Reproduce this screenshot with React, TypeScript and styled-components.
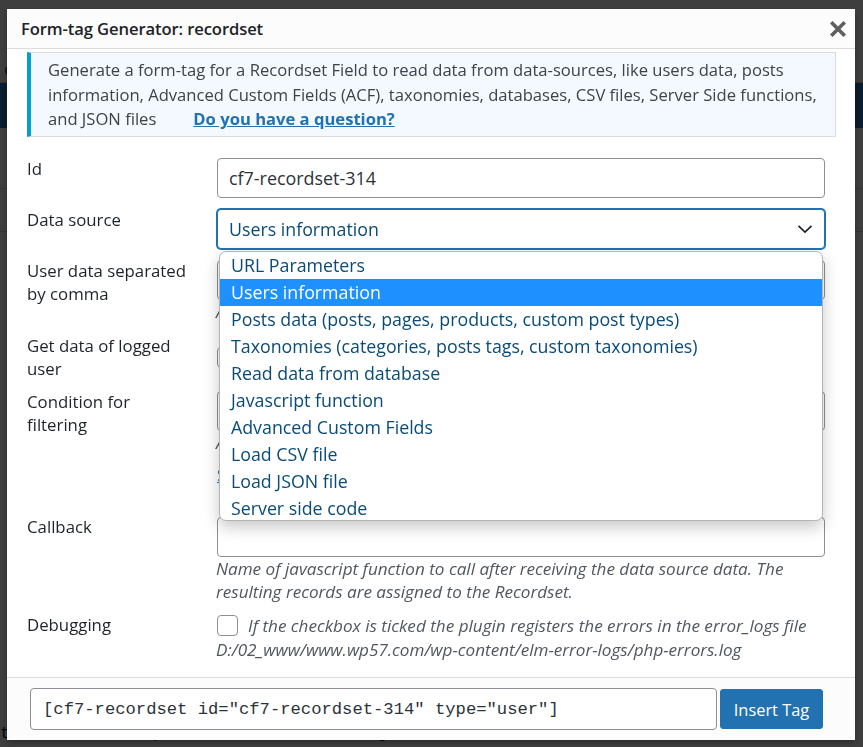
import React from 'react';
import styled, { createGlobalStyle } from 'styled-components';

const GlobalStyle = createGlobalStyle`
  html, body { margin: 0; padding: 0; }
  body {
    width: 863px;
    height: 747px;
    overflow: hidden;
    background: #f0f0f1;
    font-family: "Open Sans", "Noto Sans", sans-serif;
  }
  *, *::before, *::after { box-sizing: border-box; }
`;

/* ---------- underlying admin page (dimmed) ---------- */
const Page = styled.div`
  width: 863px;
  height: 747px;
  overflow: hidden;
  background: #f0f0f1;
  display: flex;
  flex-direction: column;
`;

const PageTop = styled.div`
  height: 86px;
  border-bottom: 1px solid #c3c4c7;
  padding: 58px 0 0 0;
  font-size: 16px;
  color: #1d2327;
`;

const BlueBand = styled.div`
  height: 50px;
  background: #2271b1;
`;

const PageRule = styled.div<{ $mt: number }>`
  margin-top: ${(p) => p.$mt}px;
  height: 1px;
  background: #c3c4c7;
`;

const CodeBlock = styled.pre<{ $mt: number; $lh: number }>`
  margin: ${(p) => p.$mt}px 0 0 0;
  padding: 0;
  font-family: "Liberation Mono", monospace;
  font-size: 17px;
  line-height: ${(p) => p.$lh}px;
  color: #1d2327;
  white-space: pre;
`;

const Overlay = styled.div`
  position: fixed;
  inset: 0;
  background: rgba(0, 0, 0, 0.74);
`;

/* ---------- modal ---------- */
const Modal = styled.div`
  position: fixed;
  top: 9px;
  left: 7px;
  width: 848px;
  height: 731px;
  background: #fff;
  box-shadow: 0 3px 6px rgba(0, 0, 0, 0.3);
  display: flex;
  flex-direction: column;
  color: #1d2327;
`;

const Header = styled.div`
  height: 40px;
  flex: none;
  display: flex;
  align-items: center;
  justify-content: space-between;
  background: #fcfcfc;
  border-bottom: 1px solid #dcdcde;
  padding-left: 14px;
`;

const Title = styled.div`
  font-size: 16.6px;
  font-weight: 600;
  color: #1d2327;
  line-height: 39px;
  letter-spacing: -0.1px;
`;

const CloseButton = styled.button`
  width: 34px;
  height: 39px;
  border: 0;
  background: transparent;
  padding: 0;
  display: flex;
  align-items: center;
  justify-content: center;
  cursor: pointer;
`;

const Body = styled.div`
  flex: 1;
  overflow: hidden;
  padding: 3px 19px 0 20px;
`;

const Notice = styled.div`
  height: 85px;
  background: #f3f9fe;
  border: 1px solid #dcdcde;
  border-left: 4px solid #00a0d2;
  padding: 5px 12px 0 17px;
  font-size: 16.6px;
  line-height: 24.5px;
  color: #3c434a;
`;

const NoticeLink = styled.a`
  margin-left: 37px;
  font-weight: 700;
  color: #2271b1;
  text-decoration: underline;
`;

const Form = styled.div`
  margin-top: 21px;
  display: flex;
  flex-direction: column;
`;

const Row = styled.div<{ $pb?: number }>`
  display: grid;
  grid-template-columns: 190px 608px;
  padding-bottom: ${(p) => (p.$pb ?? 11)}px;
`;

const Label = styled.div`
  font-size: 16.8px;
  line-height: 22.5px;
  color: #1d2327;
  white-space: nowrap;
`;

const Field = styled.div<{ $mt?: number }>`
  position: relative;
  display: flex;
  flex-direction: column;
  margin-top: ${(p) => p.$mt ?? 0}px;
`;

const TextInput = styled.div`
  height: 40px;
  border: 1px solid #8c8f94;
  border-radius: 4px;
  background: #fff;
  padding: 0 11px;
  display: flex;
  align-items: center;
  font-size: 17.9px;
  color: #2c3338;
`;

const Select = styled.div`
  height: 40px;
  border: 1px solid #2271b1;
  box-shadow: 0 0 0 1px #2271b1;
  border-radius: 4px;
  background: #fff;
  padding: 0 11px;
  display: flex;
  align-items: center;
  justify-content: space-between;
  font-size: 17.8px;
  color: #0a4b78;
`;

const Description = styled.div<{ $lh?: number }>`
  font-size: 17.1px;
  font-style: italic;
  line-height: ${(p) => p.$lh ?? 24}px;
  color: #50575e;
  margin-left: -1px;
`;

const HelpLink = styled.a`
  margin-top: 8px;
  font-size: 16.8px;
  line-height: 24px;
  color: #2271b1;
  text-decoration: underline;
`;

const Checkbox = styled.span<{ $mt?: number }>`
  display: inline-block;
  width: 21px;
  height: 21px;
  border: 1px solid #8c8f94;
  border-radius: 4px;
  background: #fff;
  margin-top: ${(p) => p.$mt ?? 0}px;
`;

const InlineCheck = styled(Checkbox)`
  vertical-align: top;
  margin: 1px 10px 0 1px;
`;

const Dropdown = styled.div`
  position: absolute;
  top: 42px;
  left: 2px;
  right: 2px;
  height: 270px;
  overflow: hidden;
  background: #fff;
  border: 1px solid #b4b4b4;
  border-radius: 7px;
  box-shadow: 0 6px 16px rgba(0, 0, 0, 0.22);
  z-index: 10;
`;

const Option = styled.div<{ $selected?: boolean }>`
  height: 27px;
  line-height: 26px;
  padding-left: 11px;
  font-size: 17.8px;
  white-space: nowrap;
  color: ${(p) => (p.$selected ? '#fff' : '#0a4b78')};
  background: ${(p) => (p.$selected ? '#1e90ff' : 'transparent')};
`;

const Footer = styled.div`
  flex: none;
  height: 63px;
  border-top: 1px solid #dcdcde;
  background: #fcfcfc;
  display: flex;
  align-items: center;
  gap: 3px;
  padding: 0 32px 0 23px;
`;

const TagInput = styled.div`
  flex: 1;
  height: 42px;
  border: 1px solid #8c8f94;
  border-radius: 4px;
  background: #fff;
  padding: 0 12px;
  display: flex;
  align-items: center;
  font-family: "Liberation Mono", monospace;
  font-size: 17.2px;
  color: #2c3338;
  white-space: nowrap;
`;

const InsertButton = styled.button`
  width: 103px;
  height: 40px;
  border: 1px solid #2271b1;
  border-radius: 3px;
  background: #2271b1;
  color: #fff;
  font-family: "Open Sans", "Noto Sans", sans-serif;
  font-size: 16.4px;
  padding: 0;
  cursor: pointer;
`;

const options = [
  'URL Parameters',
  'Users information',
  'Posts data (posts, pages, products, custom post types)',
  'Taxonomies (categories, posts tags, custom taxonomies)',
  'Read data from database',
  'Javascript function',
  'Advanced Custom Fields',
  'Load CSV file',
  'Load JSON file',
  'Server side code',
];

export default function App() {
  return (
    <>
      <GlobalStyle />
      <Page>
        <PageTop>&nbsp;o</PageTop>
        <BlueBand />
        <PageRule $mt={60} />
        <PageRule $mt={42} />
        <CodeBlock $mt={212} $lh={31}>{[' s', ' 1', ' t'].join('\n')}</CodeBlock>
        <CodeBlock $mt={48} $lh={26.5}>{[' s', ' y', ' t', ' t', ' t'].join('\n')}</CodeBlock>
        <CodeBlock $mt={4} $lh={26}>{'t= 152  field= post_title2  value= v ]'}</CodeBlock>
      </Page>
      <Overlay />
      <Modal>
        <Header>
          <Title>Form-tag Generator: recordset</Title>
          <CloseButton aria-label="Close">
            <svg width="16" height="16" viewBox="0 0 16 16">
              <path d="M2.5 2.5 L13.5 13.5 M13.5 2.5 L2.5 13.5" stroke="#5f5f5f" strokeWidth="3.6" strokeLinecap="square" />
            </svg>
          </CloseButton>
        </Header>
        <Body>
          <Notice>
            Generate a form-tag for a Recordset Field to read data from data-sources, like users data, posts
            information, Advanced Custom Fields (ACF), taxonomies, databases, CSV files, Server Side functions,
            and JSON files
            <NoticeLink href="#">Do you have a question?</NoticeLink>
          </Notice>
          <Form>
            <Row>
              <Label>Id</Label>
              <Field>
                <TextInput>cf7-recordset-314</TextInput>
              </Field>
            </Row>
            <Row>
              <Label>Data source</Label>
              <Field>
                <Select>
                  <span>Users information</span>
                  <svg width="16" height="10" viewBox="0 0 16 10">
                    <path d="M1.5 1.8 L8 8 L14.5 1.8" fill="none" stroke="#1d2327" strokeWidth="1.7" />
                  </svg>
                </Select>
                <Dropdown>
                  {options.map((o) => (
                    <Option key={o} $selected={o === 'Users information'}>
                      {o}
                    </Option>
                  ))}
                </Dropdown>
              </Field>
            </Row>
            <Row>
              <Label>
                User data separated
                <br />
                by comma
              </Label>
              <Field>
                <TextInput />
                <Description>A comma separated list of user attributes</Description>
              </Field>
            </Row>
            <Row>
              <Label>
                Get data of logged
                <br />
                user
              </Label>
              <Field>
                <Checkbox $mt={12} />
              </Field>
            </Row>
            <Row $pb={29}>
              <Label>
                Condition for
                <br />
                filtering
              </Label>
              <Field>
                <TextInput />
                <Description>Apply a condition to filter the records</Description>
                <HelpLink href="#">See examples</HelpLink>
              </Field>
            </Row>
            <Row>
              <Label>Callback</Label>
              <Field $mt={1}>
                <TextInput />
                <Description $lh={23}>
                  Name of javascript function to call after receiving the data source data. The resulting records are
                  assigned to the Recordset.
                </Description>
              </Field>
            </Row>
            <Row>
              <Label>Debugging</Label>
              <Field>
                <Description>
                  <InlineCheck />
                  If the checkbox is ticked the plugin registers the errors in the error_logs file
                  D:/02_www/www.wp57.com/wp-content/elm-error-logs/php-errors.log
                </Description>
              </Field>
            </Row>
          </Form>
        </Body>
        <Footer>
          <TagInput>[cf7-recordset id="cf7-recordset-314" type="user"]</TagInput>
          <InsertButton>Insert Tag</InsertButton>
        </Footer>
      </Modal>
    </>
  );
}
